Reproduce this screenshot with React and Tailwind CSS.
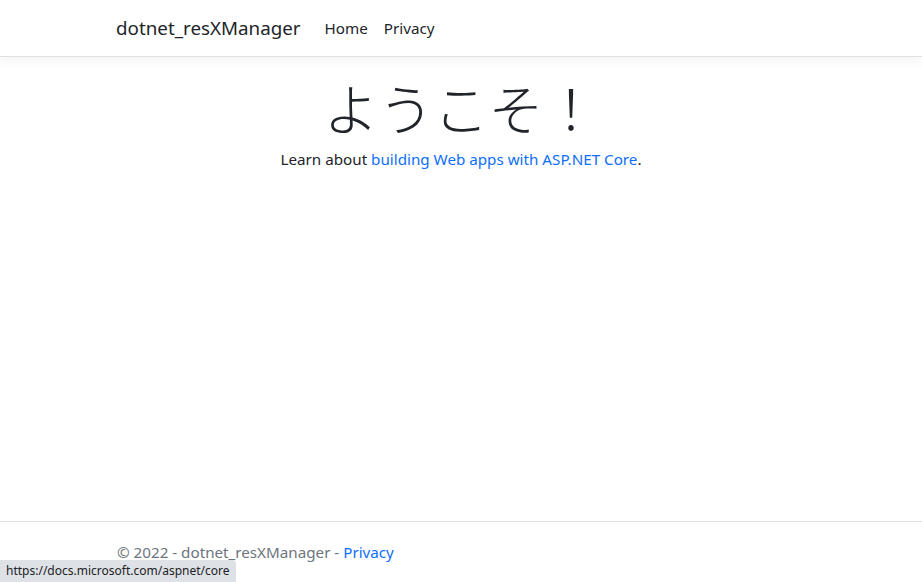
export default function App() {
  return (
    <div className="relative flex min-h-[582px] flex-col bg-white text-[#212529] font-['Noto_Sans','Noto_Sans_CJK_JP',sans-serif]">
      <header>
        <nav className="mb-4 flex h-[57px] items-center border-b border-[#dee2e6] bg-white shadow-[0_4px_12px_rgba(0,0,0,0.05)]">
          <div className="mx-auto flex w-[720px] items-center pl-[15px] pr-3">
            <a className="mr-4 text-[18.8px] leading-[30px] text-[#212529]">dotnet_resXManager</a>
            <a className="px-2 text-[15.2px] leading-6 text-[#212529]">Home</a>
            <a className="px-2 text-[15.2px] leading-6 text-[#212529]">Privacy</a>
          </div>
        </nav>
      </header>
      <main className="mx-auto w-[720px] px-3 pb-3 text-center">
        <h1 className="mb-2 font-['Noto_Sans_CJK_JP',sans-serif] text-[55px] font-light leading-[66px]">ようこそ！</h1>
        <p className="text-[15.2px] leading-6">
          Learn about <a className="text-[#0d6efd]">building Web apps with ASP.NET Core</a>.
        </p>
      </main>
      <footer className="mt-auto h-[61px] border-t border-[#dee2e6] text-[15.2px] leading-[60px] text-[#6c757d]">
        <div className="mx-auto w-[720px] pl-[16px] pr-3">
          &copy; 2022 - dotnet_resXManager - <a className="text-[#0d6efd]">Privacy</a>
        </div>
      </footer>
      <div className="absolute bottom-0 left-0 rounded-tr-[4px] bg-[#dee1e6] px-[6px] text-[12px] leading-[22px] text-[#202124]">
        https://docs.microsoft.com/aspnet/core
      </div>
    </div>
  );
}
